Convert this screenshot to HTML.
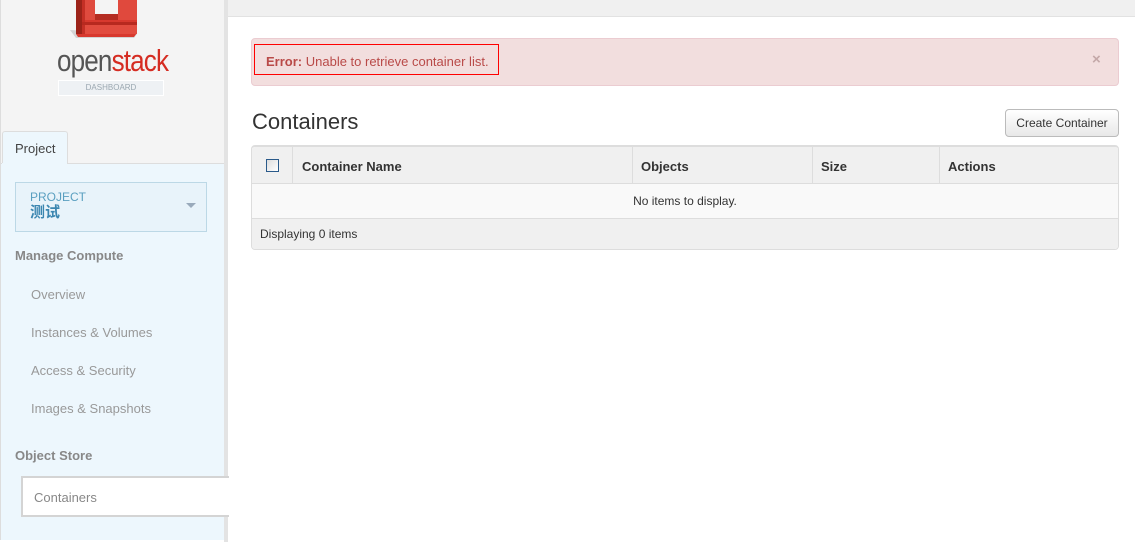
<!DOCTYPE html>
<html><head><meta charset="utf-8"><style>
*{box-sizing:border-box;margin:0;padding:0}
body{width:1135px;height:560px;overflow:hidden;background:#fff;font-family:"Liberation Sans","Noto Sans CJK SC",sans-serif;font-size:13px;color:#333;position:relative}
.abs{position:absolute}
</style></head><body>
<div class="abs" style="left:0;top:0;width:224px;height:540px;background:#f4f4f4;border-left:1px solid #ddd"></div>
<div class="abs" style="left:224px;top:0;width:4px;height:542px;background:#e3e3e3"></div>
<div class="abs" style="left:228px;top:0;width:907px;height:17px;background:#f0f0f0;border-bottom:1px solid #e2e2e2"></div>
<!-- logo -->
<svg class="abs" style="left:0;top:0" width="224" height="42" viewBox="0 0 224 42">
<path d="M70 30 L76 38 H134 L137 34 Z" fill="#999" opacity=".35"/>
<path d="M76 0 H95 V20 H118 V0 H137 V33 L134 37 H78 L76 34 Z" fill="#d8392e"/>
<path d="M76 0 H82 V34 H76 Z" fill="#9c2319"/>
<path d="M82 0 H85 V34 H82 Z" fill="#c42f25"/>
<path d="M85 0 H95 V20 H85 Z" fill="#df4a3e"/>
<path d="M118 0 H137 V20 H118 Z" fill="#e0493d"/>
<path d="M95 14 H118 V20 H95 Z" fill="#b42c22"/>
<path d="M82 22 H137 V25 H82 Z" fill="#b8291f"/>
<path d="M85 25 H137 V34 H85 Z" fill="#e24c3f"/>
</svg>
<div class="abs" style="left:57px;top:43px;font-size:31px;letter-spacing:-1px;transform:scaleX(.84);transform-origin:left;white-space:nowrap"><span style="color:#555">open</span><span style="color:#d52c22">stack</span></div>
<div class="abs" style="left:58px;top:80px;width:106px;height:16px;background:#eef1f4;border:1px solid #fff;font-size:8px;color:#9aa7b0;text-align:center;line-height:14px">DASHBOARD</div>
<!-- tab -->
<div class="abs" style="left:2px;top:131px;width:66px;height:33px;background:#edf7fd;border:1px solid #ddd;border-bottom:none;border-radius:3px 3px 0 0;padding:9px 0 0 12px;color:#444">Project</div>
<div class="abs" style="left:1px;top:163px;width:223px;height:377px;background:#edf7fd;border-top:1px solid #ddd"></div>
<div class="abs" style="left:2px;top:163px;width:65px;height:2px;background:#edf7fd"></div>
<div class="abs" style="left:15px;top:182px;width:192px;height:50px;background:#e8f3fa;border:1px solid #bcd8e6;padding:7px 0 0 14px;color:#5a9fc0">
<div style="font-size:12px;line-height:14px">PROJECT</div>
<div style="font-size:15px;font-weight:bold;color:#3b86b0;line-height:18px">测试</div>
</div>
<div class="abs" style="left:186px;top:203px;width:0;height:0;border-left:5px solid transparent;border-right:5px solid transparent;border-top:5px solid #9ab"></div>
<div class="abs" style="left:15px;top:248px;font-weight:bold;color:#888">Manage Compute</div>
<div class="abs" style="left:31px;top:287px;color:#999">Overview</div>
<div class="abs" style="left:31px;top:325px;color:#999">Instances &amp; Volumes</div>
<div class="abs" style="left:31px;top:363px;color:#999">Access &amp; Security</div>
<div class="abs" style="left:31px;top:401px;color:#999">Images &amp; Snapshots</div>
<div class="abs" style="left:15px;top:448px;font-weight:bold;color:#888">Object Store</div>
<div class="abs" style="left:21px;top:476px;width:208px;height:41px;background:#fff;border:2px solid #d4d4d4;border-right:none;padding:12px 0 0 11px;color:#888">Containers</div>
<!-- alert -->
<div class="abs" style="left:251px;top:38px;width:868px;height:48px;background:#f2dede;border:1px solid #ebccd1;border-radius:4px"></div>
<div class="abs" style="left:254px;top:44px;width:245px;height:31px;border:1px solid #f00;padding:9px 0 0 11px;color:#b94a48;white-space:nowrap"><b>Error:</b> Unable to retrieve container list.</div>
<div class="abs" style="left:1092px;top:51px;color:#c4a8a8;font-size:15px;font-weight:bold">×</div>
<div class="abs" style="left:252px;top:109px;font-size:22px;color:#333">Containers</div>
<div class="abs" style="left:1005px;top:109px;width:114px;height:28px;border:1px solid #bbb;border-radius:4px;background:linear-gradient(#fff,#e8e8e8);font-size:12px;text-align:center;line-height:26px;color:#333">Create Container</div>
<!-- table -->
<div class="abs" style="left:251px;top:145px;width:868px;height:105px;border:1px solid #ddd;border-top:2px solid #ddd;border-radius:4px;overflow:hidden">
<div style="height:37px;background:#f0f0f0;border-bottom:1px solid #ddd;position:relative;font-weight:bold;font-size:13px">
<div class="abs" style="left:40px;top:0;width:1px;height:37px;background:#ddd"></div>
<div class="abs" style="left:380px;top:0;width:1px;height:37px;background:#ddd"></div>
<div class="abs" style="left:560px;top:0;width:1px;height:37px;background:#ddd"></div>
<div class="abs" style="left:687px;top:0;width:1px;height:37px;background:#ddd"></div>
<div class="abs" style="left:14px;top:12px;width:13px;height:13px;border:1px solid #2a5a8a;background:linear-gradient(135deg,#ddd,#fff)"></div>
<div class="abs" style="left:50px;top:12px">Container Name</div>
<div class="abs" style="left:389px;top:12px">Objects</div>
<div class="abs" style="left:569px;top:12px">Size</div>
<div class="abs" style="left:696px;top:12px">Actions</div>
</div>
<div style="height:35px;background:#f9f9f9;border-bottom:1px solid #ddd;text-align:center;line-height:34px;font-size:12px">No items to display.</div>
<div style="height:31px;background:#f0f0f0;padding-left:8px;line-height:31px;font-size:12px">Displaying 0 items</div>
</div>
</body></html>
